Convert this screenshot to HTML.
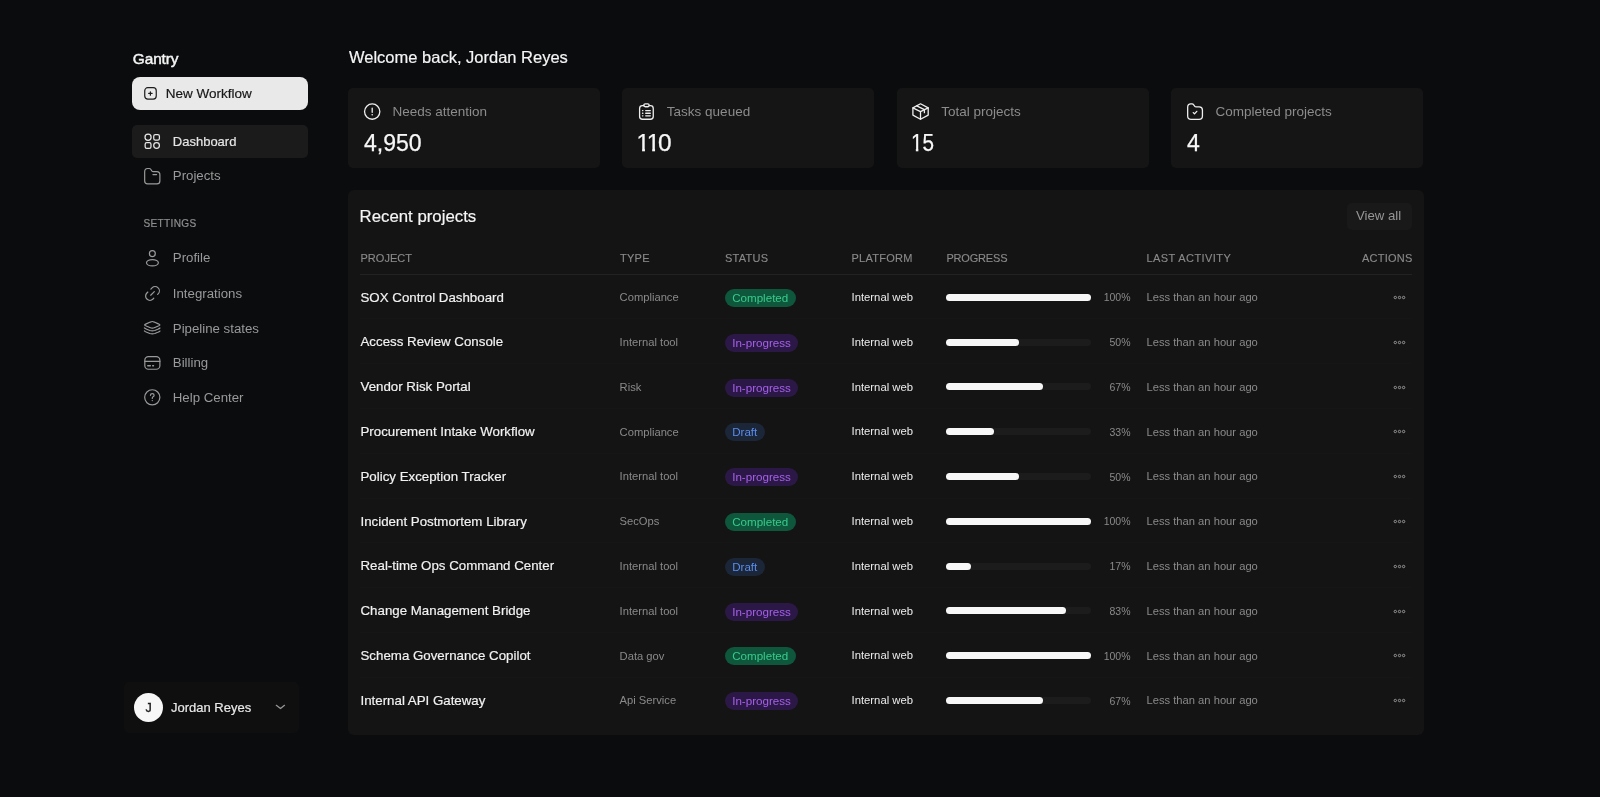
<!DOCTYPE html>
<html><head><meta charset="utf-8">
<style>
*{box-sizing:border-box;margin:0;padding:0}
body{will-change:transform}
.one{display:inline-block;clip-path:polygon(0 0,100% 0,100% 72%,64% 72%,64% 100%,42% 100%,42% 72%,0 72%)}
.sk{-webkit-text-stroke:0.18px currentColor}
html,body{width:1600px;height:797px;overflow:hidden;background:#0b0c0e;font-family:"Liberation Sans",sans-serif}
.a{position:absolute}
.t{position:absolute;line-height:1;white-space:nowrap}
svg{position:absolute;overflow:visible}
.card{position:absolute;top:88px;width:251.95px;height:80px;background:#151515;border-radius:5px}
.card .lbl{position:absolute;left:44.5px;top:16.8px;font-size:13.5px;line-height:1;color:#8c8c8c;white-space:nowrap}
.card .val{position:absolute;left:15.6px;top:0;font-size:23.5px;line-height:1;color:#f7f7f7;white-space:nowrap;transform:scaleX(0.9);transform-origin:0 0;-webkit-text-stroke:0.25px #f7f7f7}
.nav{position:absolute;left:172.8px;font-size:13.25px;line-height:1;color:#9a9a9a;white-space:nowrap}
.hd{position:absolute;top:252.6px;font-size:11px;line-height:1;color:#8a8a8a;letter-spacing:0.25px;white-space:nowrap;-webkit-text-stroke:0.12px #8a8a8a}
.row{position:absolute;left:348px;width:1076px;height:44.8px}
.row .name{-webkit-text-stroke:0.18px #f2f2f2;position:absolute;left:12.5px;font-size:13.3px;line-height:1;color:#f2f2f2;white-space:nowrap}
.row .typ{position:absolute;left:271.6px;font-size:11.2px;line-height:1;color:#8a8a8a;white-space:nowrap}
.row .plat{position:absolute;left:503.5px;font-size:11.3px;line-height:1;color:#ececec;white-space:nowrap}
.row .pct{position:absolute;right:293.5px;font-size:10.5px;line-height:1;color:#8a8a8a;white-space:nowrap;text-align:right}
.row .act{position:absolute;left:798.5px;font-size:11.2px;line-height:1;color:#8a8a8a;white-space:nowrap}
.row .badge{position:absolute;left:376.7px;height:18px;border-radius:9px;padding:0 7.5px;font-size:11.6px;line-height:18px;white-space:nowrap}
.b-c{background:#0e573c;color:#38cb8b}
.b-p{background:#2c1846;color:#a460ea}
.b-d{background:#1b2638;color:#5a8ced}
.row .track{position:absolute;left:598px;width:145px;height:7px;border-radius:4px;background:#1c1c1c}
.row .fill{position:absolute;left:0;top:0;height:7px;border-radius:4px;background:#f7f7f7}
.row .div{position:absolute;left:12px;right:12px;height:1px;background:#161616}
</style></head>
<body>
<!-- Sidebar -->
<div class="t" style="left:132.8px;top:51.2px;font-size:15.4px;letter-spacing:-0.1px;color:#f5f5f5;-webkit-text-stroke:0.45px #f5f5f5">Gantry</div>

<div class="a" style="left:132px;top:77px;width:176px;height:33px;background:#e9e9e9;border-radius:8px"></div>
<svg style="left:140px;top:82px" width="24" height="24" viewBox="0 0 24 24" fill="none" stroke="#1c1c1c" stroke-width="1.2" stroke-linecap="round"><rect x="4.74" y="5.71" width="11.51" height="11.37" rx="3"/><path d="M10.4 9.75v3.4M8.7 11.45h3.4"/></svg>
<div class="t sk" style="left:165.8px;top:87.2px;font-size:13.5px;color:#161616">New Workflow</div>

<div class="a" style="left:132px;top:125px;width:176px;height:33px;background:#1b1b1b;border-radius:5px"></div>
<svg style="left:140px;top:130px" width="24" height="24" viewBox="0 0 24 24" fill="none" stroke="#e6e6e6" stroke-width="1.25"><circle cx="8.06" cy="7.23" r="3.06"/><rect x="13.73" y="4.55" width="5.67" height="5.5" rx="1.6"/><rect x="5.15" y="12.68" width="5.83" height="5.67" rx="1.6"/><circle cx="16.57" cy="15.59" r="2.85"/></svg>
<div class="nav sk" style="top:134.9px;color:#e6e6e6;font-size:13px">Dashboard</div>

<svg style="left:140px;top:164px" width="24" height="24" viewBox="0 0 24 24" fill="none" stroke="#9a9a9a" stroke-width="1.2" stroke-linecap="round" stroke-linejoin="round"><path d="M4.67 7.8C4.67 5.6 5.6 4.52 7.6 4.52H9.3C10 4.52 10.4 4.8 10.9 5.5L11.8 6.8C12.2 7.35 12.6 7.55 13.3 7.55H16.8C18.9 7.55 19.88 8.6 19.88 10.7V16.9C19.88 19 18.9 19.88 16.9 19.88H7.6C5.6 19.88 4.67 19 4.67 16.9Z"/><path d="M12.95 10.54H16.57"/></svg>
<div class="nav" style="top:169.1px">Projects</div>

<div class="t" style="left:143.5px;top:219px;font-size:10.1px;letter-spacing:0.33px;color:#8e8e8e;-webkit-text-stroke:0.2px #8e8e8e">SETTINGS</div>

<svg style="left:140px;top:246px" width="24" height="24" viewBox="0 0 24 24" fill="none" stroke="#9a9a9a" stroke-width="1.2"><circle cx="12.35" cy="7.6" r="2.95"/><ellipse cx="12.42" cy="16.7" rx="5.95" ry="3.17"/></svg>
<div class="nav" style="top:251.1px">Profile</div>

<svg style="left:140px;top:281px" width="24" height="24" viewBox="0 0 24 24" fill="none" stroke="#9a9a9a" stroke-width="1.4" stroke-linecap="round" stroke-linejoin="round"><g transform="translate(12.5 12.43) scale(0.86) translate(-12 -12)"><path d="M9.9 14.1l4.2-4.2"/><path d="M10.1 6.9l1.363-1.436a5 5 0 0 1 7.071 7.072l-.534.464"/><path d="M13.5 17.5l-.897 1.034a5.068 5.068 0 0 1-7.127 0a4.972 4.972 0 0 1 0-7.071l1.124-1.063"/></g></svg>
<div class="nav" style="top:286.5px">Integrations</div>

<svg style="left:142px;top:318px" width="20" height="20" viewBox="0 0 20 20" fill="none" stroke="#9a9a9a" stroke-width="1.2" stroke-linecap="round" stroke-linejoin="round"><path d="M4.7 8.2C3 7.5 2.5 7.2 2.5 6.9C2.5 6.6 3 6.3 4.7 5.6L7.8 4.3C9 3.8 9.6 3.5 10.29 3.5C11 3.5 11.6 3.8 12.8 4.3L15.8 5.6C17.5 6.3 17.94 6.6 17.94 6.9C17.94 7.2 17.5 7.5 15.8 8.2L12.8 9.5C11.6 10 11 10.05 10.29 10.05C9.6 10.05 9 10 7.8 9.5Z"/><path d="M17.94 10.04C17.94 10.04 17.4 10.6 15.8 11.3L12.8 12.5C11.6 12.9 11 12.95 10.29 12.95C9.6 12.95 9 12.9 7.8 12.5L4.7 11.3C3 10.6 2.4 9.95 2.4 9.95"/><path d="M17.94 13.05C17.94 13.05 17.4 13.6 15.8 14.3L12.8 15.5C11.6 15.9 11 15.95 10.29 15.95C9.6 15.95 9 15.9 7.8 15.5L4.7 14.3C3 13.6 2.4 12.85 2.4 12.85"/></svg>
<div class="nav" style="top:321.9px">Pipeline states</div>

<svg style="left:140px;top:351px" width="24" height="24" viewBox="0 0 24 24" fill="none" stroke="#9a9a9a" stroke-width="1.2" stroke-linecap="round"><rect x="4.82" y="5.57" width="15.06" height="12.66" rx="3.6"/><path d="M4.82 10.39H19.88"/><path d="M7.7 14.76H10.4M12.65 14.76H13.55" stroke-width="1.3"/></svg>
<div class="nav" style="top:356.4px">Billing</div>

<svg style="left:140px;top:385px" width="24" height="24" viewBox="0 0 24 24" fill="none" stroke="#9a9a9a" stroke-width="1.2" stroke-linecap="round"><circle cx="12.28" cy="12.35" r="7.6"/><path d="M10.45 10.3C10.45 9.3 11.25 8.65 12.3 8.65C13.35 8.65 14.1 9.35 14.1 10.25C14.1 10.9 13.7 11.4 13.1 11.7C12.6 11.95 12.3 12.35 12.3 12.9V13.4"/><circle cx="12.3" cy="15.6" r="0.7" fill="#9a9a9a" stroke="none"/></svg>
<div class="nav" style="top:391.2px">Help Center</div>

<!-- user card -->
<div class="a" style="left:123.5px;top:681.5px;width:175px;height:51px;background:#0f0f10;border-radius:5px"></div>
<div class="a" style="left:134.2px;top:692.8px;width:29px;height:29px;border-radius:50%;background:#f7f7f7"></div>
<div class="t" style="left:134.2px;width:29px;text-align:center;top:702px;font-size:12.5px;color:#1a1a1a;-webkit-text-stroke:0.35px #1a1a1a">J</div>
<div class="t sk" style="left:171px;top:700.6px;font-size:13px;color:#e9e9e9">Jordan Reyes</div>
<svg style="left:268px;top:694px" width="24" height="24" viewBox="0 0 24 24" fill="none" stroke="#959595" stroke-width="1.3" stroke-linecap="round" stroke-linejoin="round"><path d="M8.3 11.35L12.5 14.6L16.5 11.35"/></svg>

<!-- Main -->
<div class="t sk" style="left:349px;top:48.8px;font-size:16.5px;color:#f5f5f5">Welcome back, Jordan Reyes</div>

<div class="card" style="left:348px">
<svg style="left:12px;top:12px" width="24" height="24" viewBox="0 0 24 24" fill="none" stroke="#eeeeee" stroke-width="1.3" stroke-linecap="round"><circle cx="12.2" cy="11.6" r="7.65"/><path d="M12.2 8.1V12.3"/><circle cx="12.2" cy="14.75" r="0.8" fill="#eeeeee" stroke="none"/></svg>
  <div class="lbl">Needs attention</div>
  <div class="val" style="top:44px;transform:scaleX(0.98)">4,950</div>
</div>
<div class="card" style="left:622.35px">
<svg style="left:11.65px;top:12px" width="24" height="24" viewBox="0 0 24 24" fill="none" stroke="#eeeeee" stroke-width="1.3" stroke-linecap="round" stroke-linejoin="round"><path d="M9.8 5.6H8.4C6.5 5.6 5.6 6.5 5.6 8.4V16.45C5.6 18.35 6.5 19.25 8.4 19.25H16.45C18.35 19.25 19.25 18.35 19.25 16.45V8.4C19.25 6.5 18.35 5.6 16.45 5.6H15.2"/><rect x="9.8" y="3.8" width="5.4" height="2.95" rx="1.45"/><path d="M8.5 10.54H8.9M11.7 10.54H16.3M8.5 13.25H8.9M11.7 13.25H16.3M8.5 15.81H8.9M11.7 15.81H16.3"/></svg>
  <div class="lbl">Tasks queued</div>
  <div class="val" style="top:44px;transform:none;left:14.25px"><span class="one" style="margin-right:-3px">1</span><span class="one" style="margin-right:-2.1px">1</span><span style="display:inline-block;transform:scaleX(1.04);transform-origin:0 0">0</span></div>
</div>
<div class="card" style="left:896.7px">
  <svg style="left:12.3px;top:12px" width="24" height="24" viewBox="0 0 24 24" fill="none" stroke="#eeeeee" stroke-width="1.3" stroke-linecap="round" stroke-linejoin="round"><path d="M11.5 3.8L19.2 7.9V15.1L11.5 19.2L3.9 15.1V7.9Z"/><path d="M3.9 7.9L11.5 11.7L19.2 7.9M11.5 11.7V19.2"/><path d="M7.7 5.8L15.4 9.7V12.7"/></svg>
  <div class="lbl">Total projects</div>
  <div class="val" style="top:44px;transform:scaleX(0.88);left:14.3px"><span class="one">1</span>5</div>
</div>
<div class="card" style="left:1171.05px">
  <svg style="left:11.95px;top:12px" width="24" height="24" viewBox="0 0 24 24" fill="none" stroke="#eeeeee" stroke-width="1.3" stroke-linecap="round" stroke-linejoin="round"><path d="M4.67 7.3C4.67 5 5.7 3.9 7.8 3.9H9C9.8 3.9 10.3 4.3 10.9 5.1L11.6 6.1C12 6.7 12.4 6.95 13.2 6.95H16.3C18.4 6.95 19.43 8 19.43 10.1V15.9C19.43 18.2 18.3 19.28 16.1 19.28H8C5.8 19.28 4.67 18.2 4.67 15.9Z"/><path d="M10.3 12.6L11.5 13.9L13.8 11.35"/></svg>
  <div class="lbl">Completed projects</div>
  <div class="val" style="top:44px;transform:scaleX(0.98)">4</div>
</div>

<!-- Panel -->
<div class="a" style="left:348px;top:189.6px;width:1075.5px;height:545.4px;background:#141414;border-radius:6px"></div>
<div class="t sk" style="left:359.6px;top:209.3px;font-size:16.8px;color:#f5f5f5">Recent projects</div>
<div class="a" style="left:1346.5px;top:203px;width:65px;height:26.5px;background:#191919;border-radius:5px"></div>
<div class="t" style="left:1356px;top:209.4px;font-size:13.2px;color:#969696">View all</div>

<div class="hd" style="left:360.5px;letter-spacing:0.03px">PROJECT</div>
<div class="hd" style="left:620px">TYPE</div>
<div class="hd" style="left:725px">STATUS</div>
<div class="hd" style="left:851.5px">PLATFORM</div>
<div class="hd" style="left:946.4px;letter-spacing:-0.18px">PROGRESS</div>
<div class="hd" style="left:1146.5px;letter-spacing:0.42px">LAST ACTIVITY</div>
<div class="hd" style="left:1362px">ACTIONS</div>
<div class="a" style="left:360px;top:274px;width:1052px;height:1px;background:#222222"></div>

<div id="rows"><div class="row" style="top:274.90px">
<div class="name" style="top:15.8px">SOX Control Dashboard</div>
<div class="typ" style="top:17.3px">Compliance</div>
<div class="badge b-c" style="top:14.1px">Completed</div>
<div class="plat" style="top:17.1px">Internal web</div>
<div class="track" style="top:18.9px"><div class="fill" style="width:145.0px"></div></div>
<div class="pct" style="top:17.6px">100%</div>
<div class="act" style="top:17.3px">Less than an hour ago</div>
<svg style="left:1045px;top:17.1px" width="14" height="10" viewBox="0 0 14 10" fill="none" stroke="#969696" stroke-width="1"><circle cx="2.3" cy="5.5" r="1.2"/><circle cx="6.5" cy="5.5" r="1.2"/><circle cx="10.6" cy="5.5" r="1.2"/></svg>
<div class="div" style="top:43.6px"></div></div>
<div class="row" style="top:319.70px">
<div class="name" style="top:15.8px">Access Review Console</div>
<div class="typ" style="top:17.3px">Internal tool</div>
<div class="badge b-p" style="top:14.1px">In-progress</div>
<div class="plat" style="top:17.1px">Internal web</div>
<div class="track" style="top:18.9px"><div class="fill" style="width:72.5px"></div></div>
<div class="pct" style="top:17.6px">50%</div>
<div class="act" style="top:17.3px">Less than an hour ago</div>
<svg style="left:1045px;top:17.1px" width="14" height="10" viewBox="0 0 14 10" fill="none" stroke="#969696" stroke-width="1"><circle cx="2.3" cy="5.5" r="1.2"/><circle cx="6.5" cy="5.5" r="1.2"/><circle cx="10.6" cy="5.5" r="1.2"/></svg>
<div class="div" style="top:43.6px"></div></div>
<div class="row" style="top:364.50px">
<div class="name" style="top:15.8px">Vendor Risk Portal</div>
<div class="typ" style="top:17.3px">Risk</div>
<div class="badge b-p" style="top:14.1px">In-progress</div>
<div class="plat" style="top:17.1px">Internal web</div>
<div class="track" style="top:18.9px"><div class="fill" style="width:97.2px"></div></div>
<div class="pct" style="top:17.6px">67%</div>
<div class="act" style="top:17.3px">Less than an hour ago</div>
<svg style="left:1045px;top:17.1px" width="14" height="10" viewBox="0 0 14 10" fill="none" stroke="#969696" stroke-width="1"><circle cx="2.3" cy="5.5" r="1.2"/><circle cx="6.5" cy="5.5" r="1.2"/><circle cx="10.6" cy="5.5" r="1.2"/></svg>
<div class="div" style="top:43.6px"></div></div>
<div class="row" style="top:409.30px">
<div class="name" style="top:15.8px">Procurement Intake Workflow</div>
<div class="typ" style="top:17.3px">Compliance</div>
<div class="badge b-d" style="top:14.1px">Draft</div>
<div class="plat" style="top:17.1px">Internal web</div>
<div class="track" style="top:18.9px"><div class="fill" style="width:47.9px"></div></div>
<div class="pct" style="top:17.6px">33%</div>
<div class="act" style="top:17.3px">Less than an hour ago</div>
<svg style="left:1045px;top:17.1px" width="14" height="10" viewBox="0 0 14 10" fill="none" stroke="#969696" stroke-width="1"><circle cx="2.3" cy="5.5" r="1.2"/><circle cx="6.5" cy="5.5" r="1.2"/><circle cx="10.6" cy="5.5" r="1.2"/></svg>
<div class="div" style="top:43.6px"></div></div>
<div class="row" style="top:454.10px">
<div class="name" style="top:15.8px">Policy Exception Tracker</div>
<div class="typ" style="top:17.3px">Internal tool</div>
<div class="badge b-p" style="top:14.1px">In-progress</div>
<div class="plat" style="top:17.1px">Internal web</div>
<div class="track" style="top:18.9px"><div class="fill" style="width:72.5px"></div></div>
<div class="pct" style="top:17.6px">50%</div>
<div class="act" style="top:17.3px">Less than an hour ago</div>
<svg style="left:1045px;top:17.1px" width="14" height="10" viewBox="0 0 14 10" fill="none" stroke="#969696" stroke-width="1"><circle cx="2.3" cy="5.5" r="1.2"/><circle cx="6.5" cy="5.5" r="1.2"/><circle cx="10.6" cy="5.5" r="1.2"/></svg>
<div class="div" style="top:43.6px"></div></div>
<div class="row" style="top:498.90px">
<div class="name" style="top:15.8px">Incident Postmortem Library</div>
<div class="typ" style="top:17.3px">SecOps</div>
<div class="badge b-c" style="top:14.1px">Completed</div>
<div class="plat" style="top:17.1px">Internal web</div>
<div class="track" style="top:18.9px"><div class="fill" style="width:145.0px"></div></div>
<div class="pct" style="top:17.6px">100%</div>
<div class="act" style="top:17.3px">Less than an hour ago</div>
<svg style="left:1045px;top:17.1px" width="14" height="10" viewBox="0 0 14 10" fill="none" stroke="#969696" stroke-width="1"><circle cx="2.3" cy="5.5" r="1.2"/><circle cx="6.5" cy="5.5" r="1.2"/><circle cx="10.6" cy="5.5" r="1.2"/></svg>
<div class="div" style="top:43.6px"></div></div>
<div class="row" style="top:543.70px">
<div class="name" style="top:15.8px">Real-time Ops Command Center</div>
<div class="typ" style="top:17.3px">Internal tool</div>
<div class="badge b-d" style="top:14.1px">Draft</div>
<div class="plat" style="top:17.1px">Internal web</div>
<div class="track" style="top:18.9px"><div class="fill" style="width:24.6px"></div></div>
<div class="pct" style="top:17.6px">17%</div>
<div class="act" style="top:17.3px">Less than an hour ago</div>
<svg style="left:1045px;top:17.1px" width="14" height="10" viewBox="0 0 14 10" fill="none" stroke="#969696" stroke-width="1"><circle cx="2.3" cy="5.5" r="1.2"/><circle cx="6.5" cy="5.5" r="1.2"/><circle cx="10.6" cy="5.5" r="1.2"/></svg>
<div class="div" style="top:43.6px"></div></div>
<div class="row" style="top:588.50px">
<div class="name" style="top:15.8px">Change Management Bridge</div>
<div class="typ" style="top:17.3px">Internal tool</div>
<div class="badge b-p" style="top:14.1px">In-progress</div>
<div class="plat" style="top:17.1px">Internal web</div>
<div class="track" style="top:18.9px"><div class="fill" style="width:120.3px"></div></div>
<div class="pct" style="top:17.6px">83%</div>
<div class="act" style="top:17.3px">Less than an hour ago</div>
<svg style="left:1045px;top:17.1px" width="14" height="10" viewBox="0 0 14 10" fill="none" stroke="#969696" stroke-width="1"><circle cx="2.3" cy="5.5" r="1.2"/><circle cx="6.5" cy="5.5" r="1.2"/><circle cx="10.6" cy="5.5" r="1.2"/></svg>
<div class="div" style="top:43.6px"></div></div>
<div class="row" style="top:633.30px">
<div class="name" style="top:15.8px">Schema Governance Copilot</div>
<div class="typ" style="top:17.3px">Data gov</div>
<div class="badge b-c" style="top:14.1px">Completed</div>
<div class="plat" style="top:17.1px">Internal web</div>
<div class="track" style="top:18.9px"><div class="fill" style="width:145.0px"></div></div>
<div class="pct" style="top:17.6px">100%</div>
<div class="act" style="top:17.3px">Less than an hour ago</div>
<svg style="left:1045px;top:17.1px" width="14" height="10" viewBox="0 0 14 10" fill="none" stroke="#969696" stroke-width="1"><circle cx="2.3" cy="5.5" r="1.2"/><circle cx="6.5" cy="5.5" r="1.2"/><circle cx="10.6" cy="5.5" r="1.2"/></svg>
<div class="div" style="top:43.6px"></div></div>
<div class="row" style="top:678.10px">
<div class="name" style="top:15.8px">Internal API Gateway</div>
<div class="typ" style="top:17.3px">Api Service</div>
<div class="badge b-p" style="top:14.1px">In-progress</div>
<div class="plat" style="top:17.1px">Internal web</div>
<div class="track" style="top:18.9px"><div class="fill" style="width:97.2px"></div></div>
<div class="pct" style="top:17.6px">67%</div>
<div class="act" style="top:17.3px">Less than an hour ago</div>
<svg style="left:1045px;top:17.1px" width="14" height="10" viewBox="0 0 14 10" fill="none" stroke="#969696" stroke-width="1"><circle cx="2.3" cy="5.5" r="1.2"/><circle cx="6.5" cy="5.5" r="1.2"/><circle cx="10.6" cy="5.5" r="1.2"/></svg>
</div></div><!--/rows-->
</body></html>
